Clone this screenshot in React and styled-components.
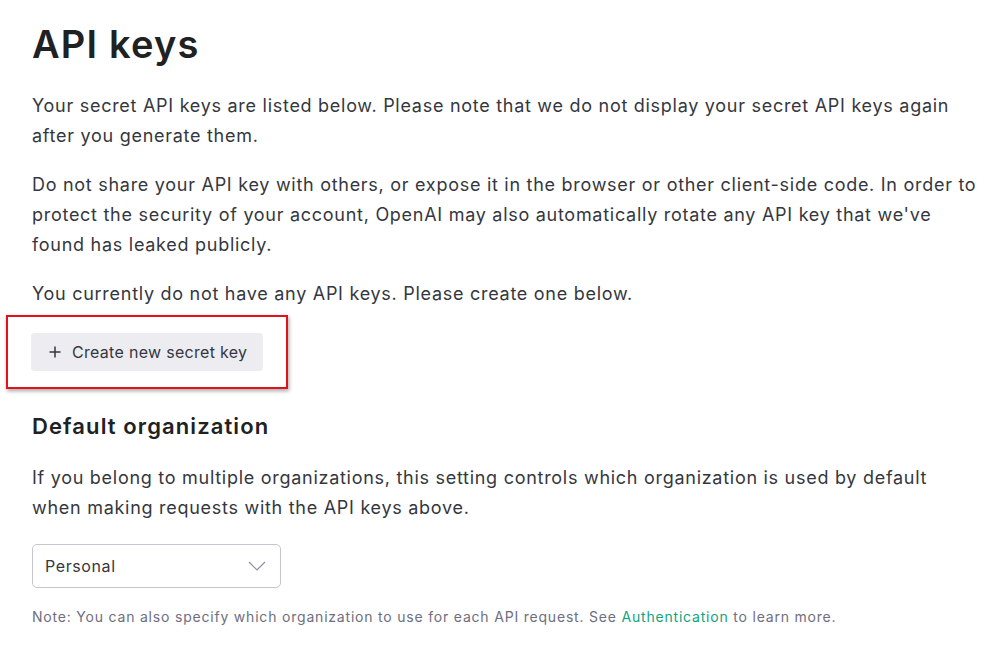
import React from 'react';
import styled, { createGlobalStyle } from 'styled-components';

const Global = createGlobalStyle`
  body {
    margin: 0;
    background: #fff;
    font-family: Inter, "Noto Sans", sans-serif;
    color: #353740;
  }
`;

const Page = styled.main`
  padding: 22px 32px 0 32px;
  width: 945px;
`;

const Title = styled.h1`
  font-size: 38px;
  font-weight: 600;
  line-height: 44px;
  margin: 0 0 25px 0;
  color: #202123;
  letter-spacing: 1.2px;
`;

const Text = styled.p`
  font-size: 18px;
  line-height: 30px;
  margin: 0 0 ${p => p.$gap || 19}px 0;
  letter-spacing: 0.72px;
`;

const Highlight = styled.div`
  margin: 0 0 0 -26px;
  width: 282px;
  height: 74px;
  box-sizing: border-box;
  border: 2px solid #e0131b;
  box-shadow: 1px 2px 4px rgba(0, 0, 0, 0.35);
  display: flex;
  align-items: center;
  padding-left: 23px;
`;

const Button = styled.button`
  display: flex;
  align-items: center;
  gap: 10px;
  height: 38px;
  width: 232px;
  padding: 0 0 0 17px;
  border: none;
  border-radius: 4px;
  background: #ececf1;
  color: #353740;
  font-family: inherit;
  font-size: 16px;
  letter-spacing: 0.3px;
  white-space: nowrap;
`;

const Subtitle = styled.h2`
  font-size: 22px;
  font-weight: 600;
  line-height: 30px;
  margin: 22px 0 22px 0;
  color: #202123;
  letter-spacing: 1.1px;
`;

const Select = styled.div`
  width: 249px;
  height: 44px;
  box-sizing: border-box;
  border: 1px solid #c5c5d2;
  border-radius: 5px;
  display: flex;
  align-items: center;
  justify-content: space-between;
  padding: 0 14px 0 12px;
  font-size: 16px;
  letter-spacing: 0.6px;
  margin-top: 21px;
`;

const Note = styled.p`
  font-size: 14px;
  color: #6e6e80;
  margin: 19px 0 0 0;
  line-height: 20px;
  letter-spacing: 0.8px;
`;

const Link = styled.a`
  color: #10a37f;
  text-decoration: none;
`;

export default function App() {
  return (
    <>
      <Global />
      <Page>
        <Title>API keys</Title>
        <Text>
          Your secret API keys are listed below. Please note that we do not display your secret API keys again after you generate them.
        </Text>
        <Text>
          Do not share your API key with others, or expose it in the browser or other client-side code. In order to protect the security of your account, OpenAI may also automatically rotate any API key that we've found has leaked publicly.
        </Text>
        <Text $gap={6}>You currently do not have any API keys. Please create one below.</Text>
        <Highlight>
          <Button>
            <svg width="14" height="14" viewBox="0 0 14 14" fill="none" stroke="#353740" strokeWidth="1.5">
              <path d="M7 1.5v11M1.5 7h11" />
            </svg>
            Create new secret key
          </Button>
        </Highlight>
        <Subtitle>Default organization</Subtitle>
        <Text $gap={0}>
          If you belong to multiple organizations, this setting controls which organization is used by default when making requests with the API keys above.
        </Text>
        <Select>
          <span>Personal</span>
          <svg width="18" height="10" viewBox="0 0 18 10" fill="none" stroke="#8e8ea0" strokeWidth="1.2">
            <path d="M1 1l8 8 8-8" />
          </svg>
        </Select>
        <Note>
          Note: You can also specify which organization to use for each API request. See <Link href="#">Authentication</Link> to learn more.
        </Note>
      </Page>
    </>
  );
}
